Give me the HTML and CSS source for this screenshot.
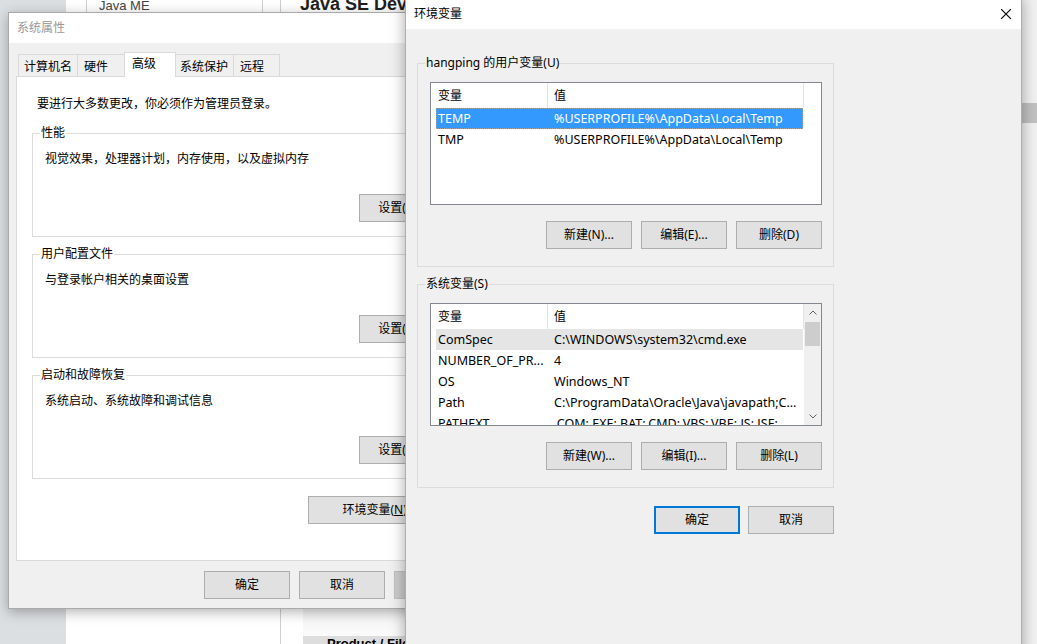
FILE: index.html
```html
<!DOCTYPE html>
<html lang="zh-CN">
<head>
    <meta charset="UTF-8">
    <meta name="viewport" content="width=device-width, initial-scale=1.0">
    <title>环境变量</title>
    <link rel="stylesheet" href="styles.css">
</head>
<body>
    <!-- the browser page behind the dialogs -->
    <div class="browser">
        <div class="gutter"></div>
        <div class="sidebar">
            <div class="side-box">
                <div class="side-item">Java ME</div>
            </div>
        </div>
        <div class="content">
            <h1 class="page-title">Java SE Development Kit</h1>
            <div class="content-fill"></div>
            <div class="table-band"></div>
            <div class="table-head">Product / File Description</div>
        </div>
        <div class="page-scroll"><div class="page-thumb"></div></div>
    </div>

    <!-- 系统属性 -->
    <div class="window sysprops">
        <div class="titlebar"><span class="title">系统属性</span></div>
        <div class="win-body">
            <div class="tabs">
                <div class="tab">计算机名</div>
                <div class="tab">硬件</div>
                <div class="tab active">高级</div>
                <div class="tab">系统保护</div>
                <div class="tab">远程</div>
            </div>
            <div class="tab-panel">
                <p class="note">要进行大多数更改，你必须作为管理员登录。</p>
                <fieldset class="group">
                    <legend>性能</legend>
                    <p class="group-text">视觉效果，处理器计划，内存使用，以及虚拟内存</p>
                    <div class="group-actions"><button class="btn">设置(S)...</button></div>
                </fieldset>
                <fieldset class="group">
                    <legend>用户配置文件</legend>
                    <p class="group-text">与登录帐户相关的桌面设置</p>
                    <div class="group-actions"><button class="btn">设置(E)...</button></div>
                </fieldset>
                <fieldset class="group">
                    <legend>启动和故障恢复</legend>
                    <p class="group-text">系统启动、系统故障和调试信息</p>
                    <div class="group-actions"><button class="btn">设置(T)...</button></div>
                </fieldset>
                <div class="panel-actions"><button class="btn btn-wide">环境变量(<u>N</u>)...</button></div>
            </div>
            <div class="footer">
                <button class="btn">确定</button>
                <button class="btn">取消</button>
                <button class="btn" disabled>应用(A)</button>
            </div>
        </div>
    </div>

    <!-- 环境变量 -->
    <div class="window envvars">
        <div class="titlebar">
            <span class="title">环境变量</span>
            <svg class="close" width="10" height="10" viewBox="0 0 10 10">
                <path d="M0 0 L10 10 M10 0 L0 10" stroke="#000" stroke-width="1.1" fill="none"/>
            </svg>
        </div>
        <div class="win-body env-body">
            <fieldset class="group env-group">
                <legend>hangping 的用户变量(U)</legend>
                <div class="listview">
                    <div class="lv-main">
                        <div class="lv-head"><div class="lv-col">变量</div><div class="lv-col">值</div></div>
                        <div class="lv-row selected"><span>TEMP</span><span>%USERPROFILE%\AppData\Local\Temp</span></div>
                        <div class="lv-row"><span>TMP</span><span>%USERPROFILE%\AppData\Local\Temp</span></div>
                    </div>
                </div>
                <div class="env-buttons">
                    <button class="btn">新建(N)...</button>
                    <button class="btn">编辑(E)...</button>
                    <button class="btn">删除(D)</button>
                </div>
            </fieldset>

            <fieldset class="group env-group">
                <legend>系统变量(S)</legend>
                <div class="listview">
                    <div class="lv-main">
                        <div class="lv-head"><div class="lv-col">变量</div><div class="lv-col">值</div></div>
                        <div class="lv-row current"><span>ComSpec</span><span>C:\WINDOWS\system32\cmd.exe</span></div>
                        <div class="lv-row"><span>NUMBER_OF_PR...</span><span>4</span></div>
                        <div class="lv-row"><span>OS</span><span>Windows_NT</span></div>
                        <div class="lv-row"><span>Path</span><span>C:\ProgramData\Oracle\Java\javapath;C...</span></div>
                        <div class="lv-row"><span>PATHEXT</span><span>.COM;.EXE;.BAT;.CMD;.VBS;.VBE;.JS;.JSE;...</span></div>
                    </div>
                    <div class="lv-scroll">
                        <svg class="arrow" width="8" height="5" viewBox="0 0 8 5"><path d="M0.5 4.5 L4 1 L7.5 4.5" stroke="#606060" fill="none"/></svg>
                        <div class="thumb"></div>
                        <div class="track"></div>
                        <svg class="arrow" width="8" height="5" viewBox="0 0 8 5"><path d="M0.5 0.5 L4 4 L7.5 0.5" stroke="#606060" fill="none"/></svg>
                    </div>
                </div>
                <div class="env-buttons">
                    <button class="btn">新建(W)...</button>
                    <button class="btn">编辑(I)...</button>
                    <button class="btn">删除(L)</button>
                </div>
            </fieldset>

            <div class="dialog-buttons">
                <button class="btn default">确定</button>
                <button class="btn">取消</button>
            </div>
        </div>
    </div>
</body>
</html>
```

FILE: styles.css
```css
*,*::before,*::after{
    box-sizing: border-box;
}
body{
    margin: 0;
    width: 1037px;
    height: 644px;
    overflow: hidden;
    position: relative;
    background: #fff;
    font-family: "Liberation Sans", Arial, sans-serif;
}

/* ---- page behind ---- */
.browser{
    display: flex;
    height: 644px;
}
.gutter{
    width: 66px;
    background: #dcdfe2;
}
.sidebar{
    width: 215px;
    padding-left: 20px;
    border-right: 1px solid #cfcfcf;
}
.side-box{
    width: 177px;
    height: 300px;
    border-left: 1px solid #d0d0d0;
    border-right: 1px solid #d0d0d0;
}
.side-item{
    padding-left: 12px;
    margin-top: -3px;
    font-size: 13px;
    line-height: 18px;
    color: #444;
}
.content{
    flex: 1;
    display: flex;
    flex-direction: column;
    padding-left: 19px;
}
.page-title{
    margin: -6px 0 0;
    font-size: 18px;
    line-height: 20px;
    color: #1f1f1f;
    white-space: nowrap;
}
.content-fill{
    flex: 1;
}
.table-band{
    height: 28px;
    margin-left: 3px;
    background: linear-gradient(#f2f2f2, #fbfbfb);
}
.table-head{
    height: 8px;
    margin-left: 3px;
    padding-left: 24px;
    background: #dddddd;
    font-size: 13px;
    font-weight: bold;
    line-height: 16px;
    overflow: visible;
}
.page-scroll{
    width: 15px;
    padding-top: 103px;
    background: #f1f1f1;
}
.page-thumb{
    height: 20px;
    background: #c1c1c1;
}

/* ---- windows ---- */
.window{
    position: absolute;
    background: #f0f0f0;
    font-family: "Noto Sans", "Noto Sans CJK SC", sans-serif;
    font-size: 12px;
    line-height: 16px;
    color: #000;
}
.sysprops{
    left: 8px;
    top: 12px;
    width: 482px;
    border: 1px solid #aaaaaa;
    box-shadow: 0 3px 12px rgba(0,0,0,.3);
}
.envvars{
    left: 405px;
    top: -2px;
    width: 617px;
    height: 700px;
    border: 1px solid #caa68b;
    box-shadow: 0 0 14px rgba(0,0,0,.35);
}
.titlebar{
    height: 30px;
    display: flex;
    align-items: center;
    padding-left: 8px;
    background: #fff;
}
.sysprops .title{
    color: #999;
}
.close{
    margin-left: auto;
    margin-right: 10px;
}

.btn{
    height: 28px;
    width: 86px;
    padding: 0;
    background: #e1e1e1;
    border: 1px solid #adadad;
    font: inherit;
    color: #000;
}
.btn:disabled{
    background: #cccccc;
    border-color: #bfbfbf;
    color: #838383;
}
.btn.default{
    border: 2px solid #0078d7;
}
.btn-wide{
    width: 143px;
}

/* ---- 系统属性 ---- */
.sysprops .win-body{
    padding: 9px 7px 9px;
}
.tabs{
    display: flex;
    align-items: flex-end;
    height: 24px;
    margin-left: 2px;
}
.tab{
    height: 22px;
    padding: 4px 0 0 5px;
    margin-left: -1px;
    border: 1px solid #d9d9d9;
    border-bottom: none;
    background: #f0f0f0;
    white-space: nowrap;
}
.tab:first-child{ width: 60px; margin-left: 0; }
.tab:nth-child(2){ width: 48px; padding-left: 6px; }
.tab:nth-child(3){ width: 52px; padding-left: 7px; }
.tab:nth-child(4){ width: 59px; padding-left: 4px; }
.tab:nth-child(5){ width: 47px; padding-left: 6px; }
.tab.active{
    position: relative;
    z-index: 1;
    height: 25px;
    margin-bottom: -1px;
    padding-top: 3px;
    background: #fff;
}
.tab-panel{
    height: 485px;
    padding: 18px 15px 0;
    background: #fff;
    border: 1px solid #d9d9d9;
}
.note{
    margin: 1px 0 13px 5px;
}
.group{
    margin: 0 0 9px;
    padding: 0 0 14px;
    border: 1px solid #dcdcdc;
}
.group legend{
    margin-left: 7px;
    padding: 0 1px;
}
.group-text{
    margin: 10px 0 0 12px;
}
.group-actions{
    display: flex;
    justify-content: flex-end;
    margin-top: 27px;
    padding-right: 20px;
}
.panel-actions{
    display: flex;
    justify-content: flex-end;
    margin-top: 17px;
    padding-right: 15px;
}
.footer{
    display: flex;
    justify-content: flex-end;
    gap: 9px;
    margin-top: 10px;
    padding-right: 2px;
}

/* ---- 环境变量 ---- */
.env-body{
    padding: 26px 0 0 11px;
}
.env-group{
    width: 417px;
    padding-bottom: 17px;
}
.listview{
    display: flex;
    width: 392px;
    height: 123px;
    margin: 11px 0 0 12px;
    background: #fff;
    border: 1px solid #828790;
    overflow: hidden;
}
.lv-main{
    flex: 1;
    overflow: hidden;
}
.lv-head{
    display: flex;
    height: 25px;
    line-height: 25px;
}
.lv-col{
    padding-left: 7px;
    border-right: 1px solid #e5e5e5;
}
.lv-col:first-child{ width: 117px; }
.lv-col:last-child{ width: 256px; padding-left: 6px; }
.lv-row{
    display: flex;
    width: 367px;
    height: 21px;
    margin-left: 5px;
    font-size: 12.5px;
    line-height: 21px;
    white-space: nowrap;
}
.lv-row span{
    overflow: hidden;
}
.lv-row span:first-child{
    width: 112px;
    padding-left: 2px;
}
.lv-row span:last-child{
    flex: 1;
    padding-left: 6px;
}
.lv-row.selected{
    background: #3399ff;
    color: #fff;
    outline: 1px dotted rgba(255,170,90,.55);
    outline-offset: -1px;
}
.lv-row.current{
    background: #e5e5e5;
}
.lv-scroll{
    width: 17px;
    display: flex;
    flex-direction: column;
    align-items: center;
    background: #f0f0f0;
}
.lv-scroll .arrow{
    margin: 6px 0;
}
.lv-scroll .thumb{
    width: 15px;
    height: 24px;
    margin-top: 1px;
    background: #cdcdcd;
}
.lv-scroll .track{
    flex: 1;
}
.env-buttons{
    display: flex;
    justify-content: flex-end;
    gap: 9px;
    margin-top: 16px;
    padding-right: 11px;
}
.dialog-buttons{
    display: flex;
    justify-content: flex-end;
    gap: 8px;
    width: 417px;
    margin-top: 18px;
}
```
